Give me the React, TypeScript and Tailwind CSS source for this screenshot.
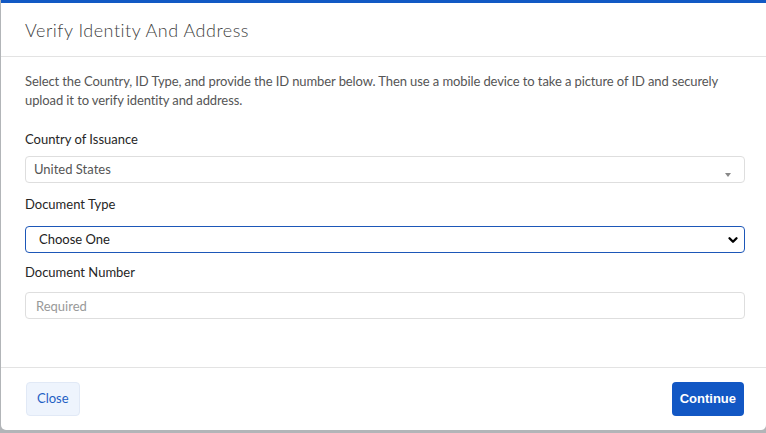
import { ChevronDown } from "lucide-react";

const font = { fontFamily: "Lato, 'Open Sans', Arial, sans-serif" };

function Label({ children }: { children: React.ReactNode }) {
  return <div className="text-[13px] leading-[16px] text-[#262626]">{children}</div>;
}

export default function App() {
  return (
    <div className="h-[433px] w-[766px] overflow-hidden bg-[#b2b5b8] pb-[3px] pl-[1px]" style={font}>
      <div className="flex h-[430px] flex-col rounded-b-[5px] border-t-[3px] border-[#1259c4] bg-white">
        {/* header */}
        <div className="flex h-[54px] shrink-0 items-center border-b border-[#e3e3e3] px-6 pt-[2px]">
          <h1 className="text-[18px] font-light tracking-[0.5px] text-[#3f3f3f]">Verify Identity And Address</h1>
        </div>

        {/* body */}
        <div className="flex flex-1 flex-col px-6 pt-[15px]">
          <p className="text-[13px] leading-[19px] tracking-[-0.1px] text-[#555]">
            Select the Country, ID Type, and provide the ID number below. Then use a mobile device to take a picture of ID and securely upload it to verify identity and address.
          </p>

          <div className="mt-[21px]">
            <Label>Country of Issuance</Label>
            <div className="relative mt-[9px] flex h-[27px] w-[720px] items-center rounded-[4px] border border-[#dedede] px-[8px] text-[13px] text-[#555]">
              United States
              <span className="absolute right-[13px] top-[16px] h-0 w-0 border-x-[3px] border-t-[4px] border-x-transparent border-t-[#888]" />
            </div>
          </div>

          <div className="mt-[13px]">
            <Label>Document Type</Label>
            <div className="relative mt-[14px] flex h-[27px] w-[720px] items-center rounded-[4px] border border-[#1d57b8] pl-[13px] text-[13px] text-[#222]">
              Choose One
              <ChevronDown className="absolute right-[4px] top-[6px] h-[14px] w-[14px] text-black" strokeWidth={4} />
            </div>
          </div>

          <div className="mt-[11px]">
            <Label>Document Number</Label>
            <input
              placeholder="Required"
              className="mt-[12px] h-[27px] w-[720px] rounded-[4px] border border-[#dedede] px-[10px] text-[13px] text-[#333] outline-none placeholder:text-[#999]"
            />
          </div>
        </div>

        {/* footer */}
        <div className="flex h-[63px] shrink-0 items-center justify-between border-t border-[#e3e3e3] pl-[25px] pr-[22px]">
          <button className="h-[34px] rounded-[4px] border border-[#e1e9f6] bg-[#eef4fd] px-[10px] text-[13px] text-[#1f5fc4]">
            Close
          </button>
          <button
            className="h-[34px] rounded-[4px] bg-[#1257c4] px-[8px] text-[13px] font-bold text-white"
            style={{ fontFamily: "Arial, 'Liberation Sans', sans-serif" }}
          >
            Continue
          </button>
        </div>
      </div>
    </div>
  );
}
